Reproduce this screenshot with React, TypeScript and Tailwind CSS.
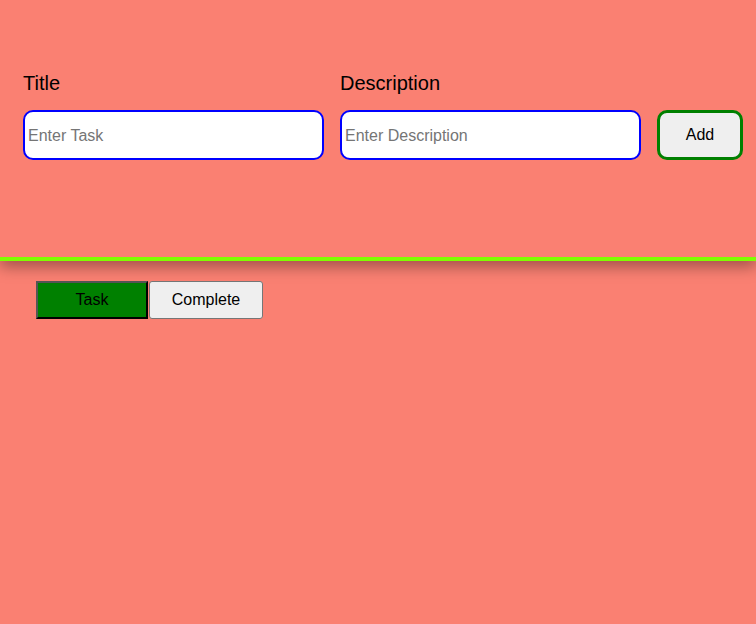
import React from "react";

export default function App() {
  return (
    <div className="min-h-screen w-full bg-[#fa8072]" style={{ fontFamily: '"Liberation Sans", Arial, sans-serif' }}>
      <div className="relative z-10 h-[261px] border-b-4 border-[#7fff00] bg-[#fa8072] shadow-[0_6px_14px_rgba(0,0,0,0.35)]">
        <div className="flex items-end gap-4 pl-[23px] pt-[72px]">
          <div className="flex w-[301px] flex-col">
            <label className="text-[20px] leading-[23px] text-black">Title</label>
            <input
              placeholder="Enter Task"
              className="mt-[15px] h-[50px] w-[301px] rounded-[10px] border-2 border-[#0000ff] bg-white pl-[3px] pt-[1px] text-[16px] text-black outline-none placeholder:text-[#757575]"
            />
          </div>
          <div className="flex w-[301px] flex-col">
            <label className="text-[20px] leading-[23px] text-black">Description</label>
            <input
              placeholder="Enter Description"
              className="mt-[15px] h-[50px] w-[301px] rounded-[10px] border-2 border-[#0000ff] bg-white pl-[3px] pt-[1px] text-[16px] text-black outline-none placeholder:text-[#757575]"
            />
          </div>
          <button className="h-[50px] w-[86px] rounded-[10px] border-[3px] border-[#008000] bg-[#efefef] text-[16px] text-black">
            Add
          </button>
        </div>
      </div>
      <div className="ml-9 mt-5 flex">
        <button className="h-[38px] w-[112px] border-2 border-b-black border-l-[#555555] border-r-black border-t-[#555555] bg-[#008000] text-[16px] text-black">
          Task
        </button>
        <button className="ml-[1px] h-[38px] w-[114px] rounded-[3px] border border-[#767676] bg-[#efefef] text-[16px] text-black">
          Complete
        </button>
      </div>
    </div>
  );
}
